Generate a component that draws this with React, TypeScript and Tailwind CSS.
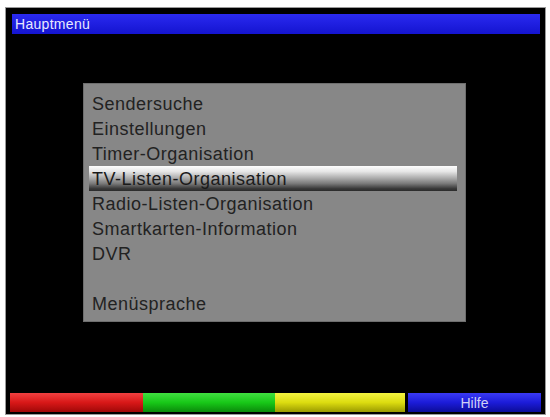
const items = [
  "Sendersuche",
  "Einstellungen",
  "Timer-Organisation",
  "TV-Listen-Organisation",
  "Radio-Listen-Organisation",
  "Smartkarten-Information",
  "DVR",
  "",
  "Menüsprache",
];

const selected = 3;

export default function App() {
  return (
    <div className="w-[550px] h-[417px] bg-white pt-[7px] pl-[5px] font-['Liberation_Sans',Arial,sans-serif]">
      <div className="w-[541px] h-[408px] bg-black border border-[#9a9a9a] flex flex-col">
        {/* title bar */}
        <div className="mt-[6px] ml-[6px] mr-[5px] h-[20px] bg-[linear-gradient(to_bottom,#2a2af0,#1414d0)] flex items-center pl-[3px]">
          <span className="text-[14px] leading-none text-[#e8e8ff] tracking-[0.3px]">Hauptmenü</span>
        </div>

        {/* menu panel */}
        <div className="mt-[49px] ml-[77px] w-[383px] h-[239px] bg-[#878787] border border-[#6e6e6e] pt-[7px] pl-[5px] pr-[8px]">
          {items.map((label, i) => (
            <div
              key={i}
              className={
                i === selected
                  ? "h-[25px] flex items-center pl-[3px] text-[18px] leading-none text-[#1a1a1a] tracking-[0.5px] bg-[linear-gradient(to_bottom,#fdfdfd_0%,#e6e6e6_22%,#a8a8a8_50%,#7a7a7a_70%,#3a3a3a_90%,#2a2a2a_100%)]"
                  : "h-[25px] flex items-center pl-[3px] text-[18px] leading-none text-[#222222] tracking-[0.5px]"
              }
            >
              {label}
            </div>
          ))}
        </div>

        {/* colour keys */}
        <div className="mt-auto mb-[2px] ml-[4px] mr-[4px] h-[19px] flex">
          <div className="w-[133px] bg-[linear-gradient(to_bottom,#f04040,#d81818_50%,#a00808)]" />
          <div className="w-[132px] bg-[linear-gradient(to_bottom,#40e040,#18c818_50%,#0a8a0a)]" />
          <div className="w-[130px] bg-[linear-gradient(to_bottom,#f4f440,#dcdc10_50%,#9a9a00)]" />
          <div className="w-[3px]" />
          <div className="flex-1 bg-[linear-gradient(to_bottom,#3a3af4,#1c1cd8_50%,#0c0c98)] flex items-center justify-center">
            <span className="text-[14px] leading-none text-[#d0d0f4]">Hilfe</span>
          </div>
        </div>
      </div>
    </div>
  );
}
